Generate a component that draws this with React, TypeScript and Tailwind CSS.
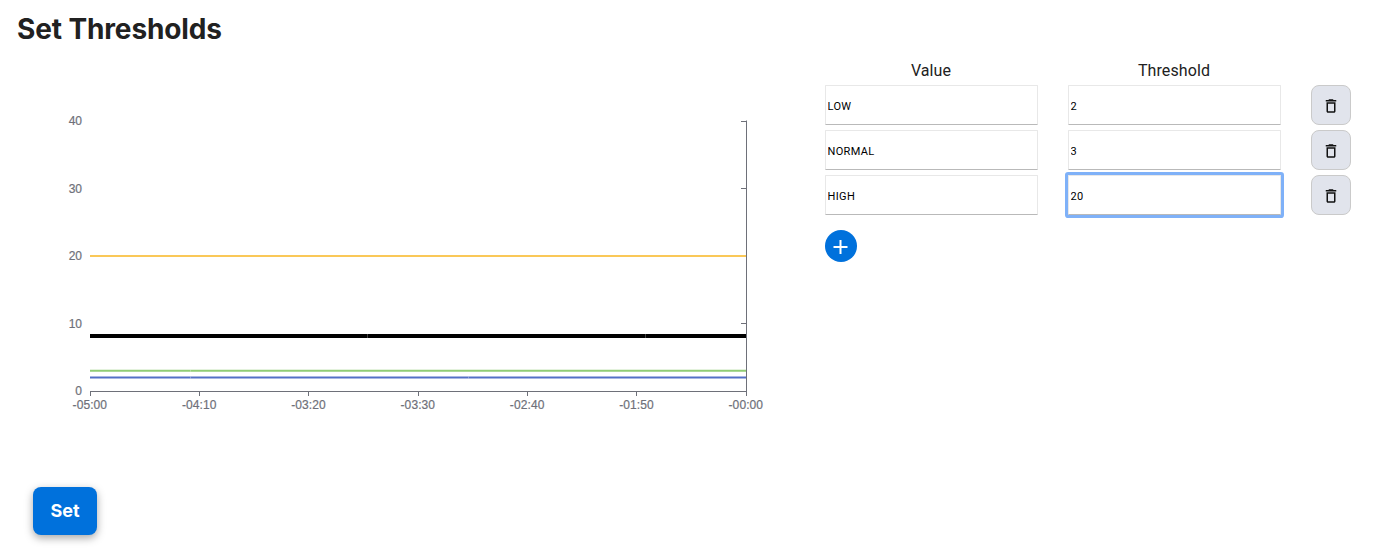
import { useState } from "react";

type Row = { value: string; threshold: string };

const X_LABELS = ["-05:00", "-04:10", "-03:20", "-03:30", "-02:40", "-01:50", "-00:00"];
const Y_LABELS = [40, 30, 20, 10, 0];
const AXIS = "#6E7079";

function Chart() {
  return (
    <svg width="800" height="400" viewBox="0 0 800 400" className="block" fontFamily='"Liberation Sans", Arial, sans-serif' fontSize="12" fill={AXIS}>
      <g stroke={AXIS} strokeWidth="0.2">
        {Y_LABELS.map((n, i) => (
          <text key={n} x="82" y={65.3 + i * 67.5} textAnchor="end">
            {n}
          </text>
        ))}
        {X_LABELS.map((label, i) => (
          <text key={label} x={89.8 + i * 109.33} y="349.2" textAnchor="middle" textLength="34.5">
            {label}
          </text>
        ))}
      </g>
      <g stroke={AXIS} strokeWidth="1">
        <path d="M90 331.5H747M746.5 60.5V336" fill="none" />
        {[61.5, 128.5, 196.5, 263.5].map((y) => (
          <path key={y} d={`M741 ${y}H746`} />
        ))}
        {[90.5, 199.5, 308.5, 418.5, 527.5, 636.5].map((x) => (
          <path key={x} d={`M${x} 331V336`} />
        ))}
      </g>
      <path d="M90 196H746" stroke="#FAC858" strokeWidth="2" />
      <path d="M90 276.1H746" stroke="#000" strokeWidth="4" />
      <path d="M90 310.75H746" stroke="#91CC75" strokeWidth="2" />
      <path d="M90 317.5H746" stroke="#5470C6" strokeWidth="2" />
      <path d="M367.5 274V278M645.5 274V278" stroke="#fff" strokeOpacity="0.25" />
      <path d="M190.5 309.7V311.7M190.5 316.5V318.5M468.5 316.5V318.5" stroke="#fff" strokeOpacity="0.3" />
    </svg>
  );
}

function TrashIcon() {
  return (
    <svg width="18" height="18" viewBox="0 0 24 24" fill="#111" className="block">
      <path d="M6 19c0 1.1.9 2 2 2h8c1.1 0 2-.9 2-2V7H6v12zM8 9h8v10H8V9zm7.5-5l-1-1h-5l-1 1H5v2h14V4z" />
    </svg>
  );
}

const inputClass =
  "h-10 w-[213px] rounded-[1px] border border-[#e8e8e8] border-b-[#b9b9b9] bg-white pt-[3px] pr-0.5 pb-px pl-[1.5px] text-[11px] tracking-[0.35px] text-black outline-none";

export default function App() {
  const [rows, setRows] = useState<Row[]>([
    { value: "LOW", threshold: "2" },
    { value: "NORMAL", threshold: "3" },
    { value: "HIGH", threshold: "20" },
  ]);

  const update = (index: number, patch: Partial<Row>) =>
    setRows(rows.map((row, i) => (i === index ? { ...row, ...patch } : row)));

  return (
    <main className="h-[558px] overflow-hidden bg-white [font-family:Roboto,sans-serif] text-[#212121]">
      <h1 className="h-[60px] pt-[9px] pl-[17px] [font-family:Inter,sans-serif] text-[28px] leading-10 font-bold tracking-[-0.13px]">
        Set Thresholds
      </h1>
      <div className="flex h-[427px]">
        <div className="w-[825px] shrink-0">
          <Chart />
        </div>
        <section>
          <div className="flex h-[25px] gap-[30px] text-center text-base leading-[22px] tracking-[0.1px]">
            <div className="w-[213px] pr-px">Value</div>
            <div className="w-[213px] pr-px">Threshold</div>
          </div>
          <div className="flex flex-col gap-[5px]">
            {rows.map((row, i) => (
              <div key={i} className="flex gap-[30px]">
                <input className={inputClass} value={row.value} onChange={(e) => update(i, { value: e.target.value })} />
                <input
                  className={`${inputClass} ${i === 2 ? "ring-3 ring-[#7fb1f8]" : ""}`}
                  value={row.threshold}
                  onChange={(e) => update(i, { threshold: e.target.value })}
                />
                <button
                  aria-label="Delete"
                  onClick={() => setRows(rows.filter((_, j) => j !== i))}
                  className="flex size-10 items-center justify-center rounded-lg border border-[#cacaca] bg-[#e1e4ec] pt-0.5"
                >
                  <TrashIcon />
                </button>
              </div>
            ))}
          </div>
          <button
            aria-label="Add"
            onClick={() => setRows([...rows, { value: "", threshold: "" }])}
            className="mt-[15px] flex size-8 items-center justify-center rounded-full bg-[#0071dc]"
          >
            <svg width="32" height="32" viewBox="0 0 32 32" stroke="#fff" strokeWidth="2">
              <path d="M8.5 17H22.5M15.5 10V24" />
            </svg>
          </button>
        </section>
      </div>
      <button className="ml-[33px] block h-12 w-16 rounded-lg bg-[#0071dc] pb-px text-center [font-family:Inter,sans-serif] text-lg leading-[46px] font-bold tracking-[-0.1px] text-white shadow-[0_3px_8px_rgba(0,0,0,0.35)]">
        Set
      </button>
    </main>
  );
}
